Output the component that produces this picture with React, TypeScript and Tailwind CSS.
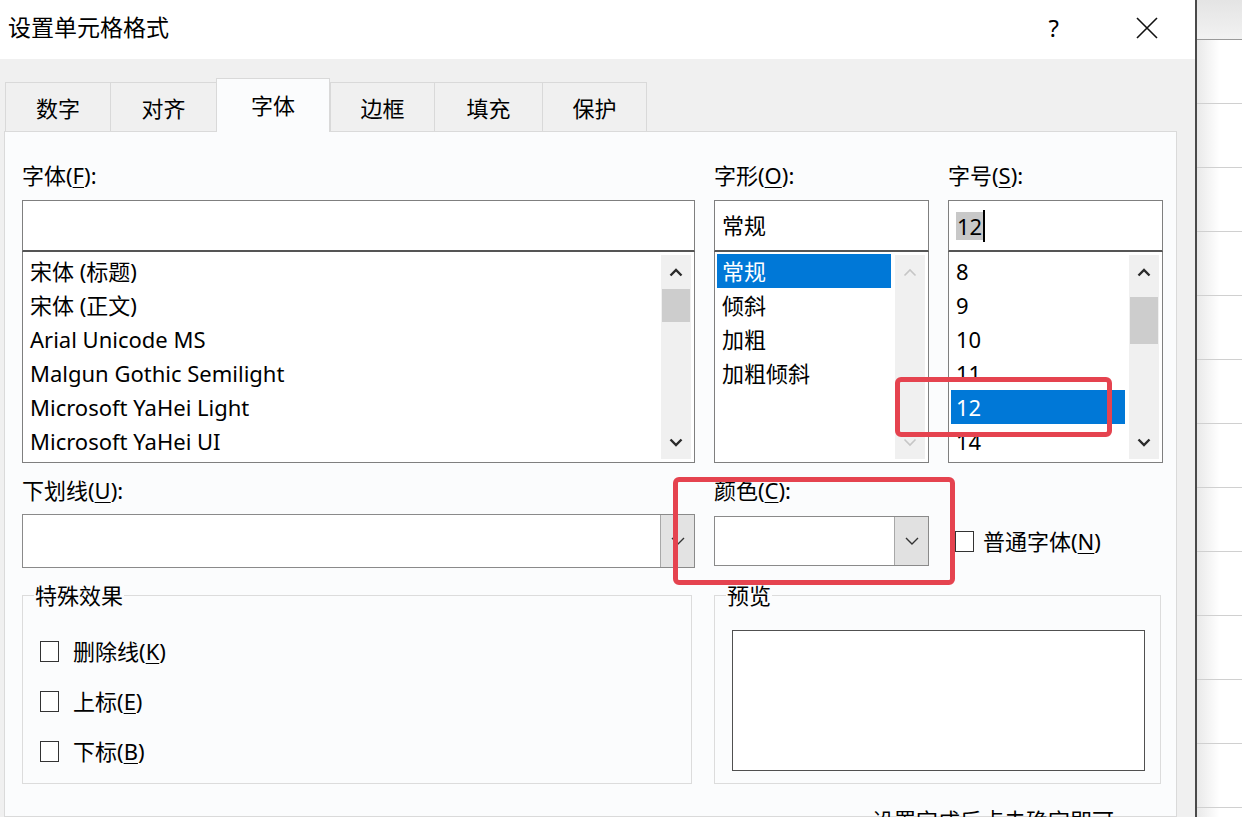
import React from 'react';

const ScrollArrow = ({ up, disabled }: { up?: boolean; disabled?: boolean }) => (
  <svg width="14" height="9" viewBox="0 0 14 9">
    <polyline
      points={up ? '1.5,7.5 7,2 12.5,7.5' : '1.5,1.5 7,7 12.5,1.5'}
      fill="none"
      stroke={disabled ? '#c6c6c6' : '#2b2b2b'}
      strokeWidth={disabled ? 1.6 : 2.4}
    />
  </svg>
);

const ComboChevron = () => (
  <svg width="14" height="8" viewBox="0 0 14 8">
    <polyline points="1,1 7,7 13,1" fill="none" stroke="#333" strokeWidth="1.4" />
  </svg>
);

const Scrollbar = ({
  thumbTop,
  thumbHeight,
  disabled,
}: {
  thumbTop?: number;
  thumbHeight?: number;
  disabled?: boolean;
}) => (
  <div className="w-[30px] my-[3px] mr-[3px] bg-[#f0f0f0] flex flex-col shrink-0">
    <div className="h-[34px] flex items-center justify-center">
      <ScrollArrow up disabled={disabled} />
    </div>
    <div className="flex-1">
      {!disabled && thumbHeight ? (
        <div className="bg-[#cdcdcd] mx-[1px]" style={{ marginTop: thumbTop, height: thumbHeight }} />
      ) : null}
    </div>
    <div className="h-[34px] flex items-center justify-center">
      <ScrollArrow disabled={disabled} />
    </div>
  </div>
);

const Key = ({ k }: { k: string }) => <span className="underline underline-offset-[3px] decoration-1">{k}</span>;

const Checkbox = () => <span className="inline-block w-[19px] h-[21px] border-[1.5px] border-[#333] bg-white shrink-0" />;

const ListBox = ({
  items,
  selected,
  thumbTop,
  thumbHeight,
  disabled,
}: {
  items: string[];
  selected?: number;
  thumbTop?: number;
  thumbHeight?: number;
  disabled?: boolean;
}) => (
  <div className="h-[211px] border border-t-0 border-[#7f7f7f] bg-white flex">
    <div className="flex-1 ml-[2px] mr-[4px] pt-[2px] overflow-hidden">
      {items.map((it, i) => (
        <div
          key={it}
          className={`h-[34px] leading-[34px] px-[5px] whitespace-nowrap ${
            i === selected ? 'bg-[#0078d7] text-white' : 'text-black'
          }`}
        >
          {it}
        </div>
      ))}
    </div>
    <Scrollbar thumbTop={thumbTop} thumbHeight={thumbHeight} disabled={disabled} />
  </div>
);

const tabs = ['数字', '对齐', '字体', '边框', '填充', '保护'];
const tabWidths = ['w-[105px]', 'w-[106px]', 'w-[114px]', 'w-[104px]', 'w-[108px]', 'w-[105px]'];

export default function App() {
  return (
    <div className="relative w-[1242px] h-[817px] overflow-hidden flex bg-white text-black font-['Noto_Sans','Noto_Sans_CJK_SC',sans-serif] text-[22px]">
      {/* Dialog */}
      <div className="w-[1195px] shrink-0 flex flex-col bg-[#f0f0f0]">
        {/* Title bar */}
        <div className="h-[59px] bg-white flex items-center pl-[8px] pr-[36px]">
          <span className="text-[23px] leading-none pb-[4px]">设置单元格格式</span>
          <span className="ml-auto text-[24px] leading-none pb-[4px]">?</span>
          <svg className="ml-[76px] mb-[4px]" width="24" height="24" viewBox="0 0 24 24">
            <path d="M2 2 L22 22 M22 2 L2 22" stroke="#111" strokeWidth="1.6" fill="none" />
          </svg>
        </div>

        {/* Tabs */}
        <div className="h-[72px] flex items-end pl-[5px]">
          {tabs.map((t, i) =>
            i === 2 ? (
              <div
                key={t}
                className={`${tabWidths[i]} h-[54px] -mb-px border border-b-0 border-[#d9d9d9] bg-[#fbfcfd] flex items-center justify-center relative z-10`}
              >
                {t}
              </div>
            ) : (
              <div
                key={t}
                className={`${tabWidths[i]} h-[49px] border-t border-l ${
                  i === 5 ? 'border-r' : ''
                } border-[#d9d9d9] bg-[#f0f0f0] flex items-center justify-center pt-[2px]`}
              >
                {t}
              </div>
            )
          )}
        </div>

        {/* Panel */}
        <div className="ml-[4px] mr-[18px] flex-1 border border-[#dadada] bg-[#fbfcfd] pl-[17px] pt-[28px]">
          <div className="grid grid-cols-[673px_215px_215px] gap-x-[19px]">
            <div className="h-[30px] leading-[30px]">
              字体(<Key k="F" />):
            </div>
            <div className="h-[30px] leading-[30px]">
              字形(<Key k="O" />):
            </div>
            <div className="h-[30px] leading-[30px]">
              字号(<Key k="S" />):
            </div>

            {/* Font name */}
            <div className="mt-[10px]">
              <div className="h-[52px] border border-b-2 border-[#7f7f7f] border-b-[#555] bg-white" />
              <ListBox
                items={['宋体 (标题)', '宋体 (正文)', 'Arial Unicode MS', 'Malgun Gothic Semilight', 'Microsoft YaHei Light', 'Microsoft YaHei UI']}
                thumbTop={0}
                thumbHeight={33}
              />
            </div>

            {/* Font style */}
            <div className="mt-[10px]">
              <div className="h-[52px] border border-b-2 border-[#7f7f7f] border-b-[#555] bg-white flex items-center pl-[7px]">
                常规
              </div>
              <ListBox items={['常规', '倾斜', '加粗', '加粗倾斜']} selected={0} disabled />
            </div>

            {/* Font size */}
            <div className="mt-[10px]">
              <div className="h-[52px] border border-b-2 border-[#7f7f7f] border-b-[#555] bg-white flex items-center pl-[7px]">
                <span className="bg-[#c8c8c8] leading-[28px] px-[1px]">12</span>
                <span className="w-[2px] h-[32px] bg-black" />
              </div>
              <ListBox items={['8', '9', '10', '11', '12', '14']} selected={4} thumbTop={8} thumbHeight={47} />
            </div>

            {/* Underline / colour */}
            <div className="mt-[12px] h-[30px] leading-[30px]">
              下划线(<Key k="U" />):
            </div>
            <div className="mt-[12px] h-[30px] leading-[30px]">
              颜色(<Key k="C" />):
            </div>
            <div className="mt-[12px]" />

            <div className="mt-[9px] h-[54px] border border-[#8a8a8a] bg-white flex justify-end">
              <div className="w-[34px] bg-[#e3e3e3] border-l border-[#a8a8a8] flex items-center justify-center">
                <ComboChevron />
              </div>
            </div>
            <div className="mt-[11px] h-[50px] border border-[#8a8a8a] bg-white flex justify-end">
              <div className="w-[34px] bg-[#e1e1e1] border-l border-[#a8a8a8] flex items-center justify-center">
                <ComboChevron />
              </div>
            </div>
            <div className="mt-[9px] h-[54px] flex items-center gap-[9px] pl-[7px]">
              <Checkbox />
              <span>
                普通字体(<Key k="N" />)
              </span>
            </div>

            {/* Special effects */}
            <fieldset className="mt-[15px] w-[670px] h-[201px] border border-[#dcdcdc]">
              <legend className="ml-[11px] px-[1px] leading-[24px]">特殊效果</legend>
              <div className="pt-[19px] pl-[17px]">
                {[
                  ['删除线', 'K'],
                  ['上标', 'E'],
                  ['下标', 'B'],
                ].map(([t, k]) => (
                  <div key={k} className="h-[50px] flex items-center gap-[14px]">
                    <Checkbox />
                    <span>
                      {t}(<Key k={k} />)
                    </span>
                  </div>
                ))}
              </div>
            </fieldset>

            {/* Preview */}
            <fieldset className="col-span-2 mt-[15px] w-[447px] h-[201px] border border-[#dcdcdc]">
              <legend className="ml-[11px] px-[1px] leading-[24px]">预览</legend>
              <div className="mt-[23px] ml-[17px] mr-[15px] h-[141px] border border-[#505050] bg-white" />
            </fieldset>
          </div>
        </div>
      </div>

      {/* Edge of the dialog */}
      <div className="w-[2px] shrink-0 bg-[#4a4a4a]" />

      {/* Spreadsheet behind */}
      <div className="flex-1 flex flex-col">
        <div className="h-[40px] shrink-0 bg-linear-to-b from-[#e4e4e4] to-[#f2f2f2] border-b border-[#9a9a9a]" />
        {Array.from({ length: 13 }).map((_, i) => (
          <div key={i} className="h-[64px] shrink-0 border-b border-[#d0d0d0] bg-linear-to-r from-[#e9e9e9] via-white to-white" />
        ))}
      </div>

      {/* Highlight boxes */}
      <div className="absolute left-[895px] top-[377px] w-[217px] h-[60px] border-[5px] border-[#e5434f] rounded-[6px]" />
      <div className="absolute left-[673px] top-[477px] w-[282px] h-[108px] border-[5px] border-[#e5434f] rounded-[6px]" />

      {/* Caption cut off at the bottom */}
      <div className="absolute left-[872px] top-[808px] leading-[24px] whitespace-nowrap">设置完成后点击确定即可</div>
    </div>
  );
}
